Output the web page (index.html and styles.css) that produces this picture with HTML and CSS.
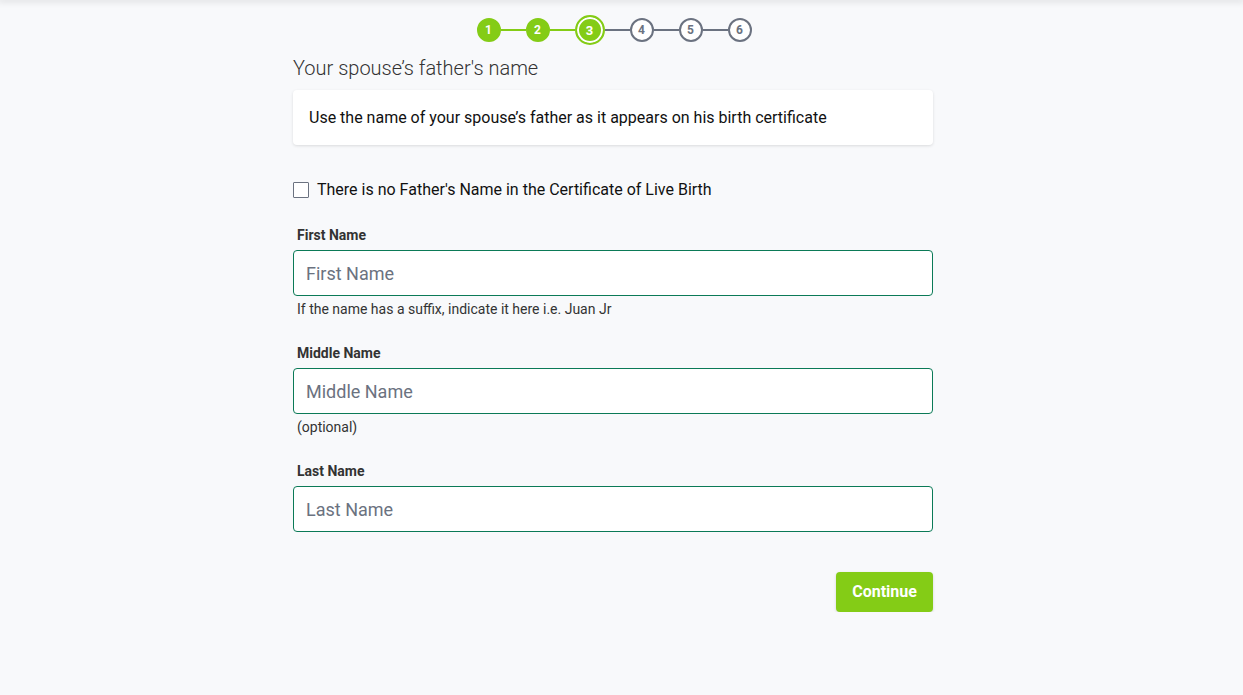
FILE: index.html
```html
<!DOCTYPE html>
<html lang="en">

<head>
    <meta charset="UTF-8">
    <meta name="viewport" content="width=device-width, initial-scale=1.0">
    <title>Spouse's Father's Name</title>
    <link rel="stylesheet" href="styles.css">
</head>

<body>
    <div class="topbar"></div>
    <div class="page">
        <div class="container">
            <div class="stepper">
                <span class="step done">1</span>
                <span class="line done"></span>
                <span class="step done">2</span>
                <span class="line done"></span>
                <span class="step active">3</span>
                <span class="line"></span>
                <span class="step">4</span>
                <span class="line"></span>
                <span class="step">5</span>
                <span class="line"></span>
                <span class="step">6</span>
            </div>

            <h1>Your spouse’s father's name</h1>
            <div class="card">Use the name of your spouse’s father as it appears on his birth certificate</div>

            <form class="form">
                <label class="check">
                    <input type="checkbox">
                    <span>There is no Father's Name in the Certificate of Live Birth</span>
                </label>

                <div class="field">
                    <label for="first">First Name</label>
                    <input type="text" id="first" placeholder="First Name">
                    <small>If the name has a suffix, indicate it here i.e. Juan Jr</small>
                </div>

                <div class="field">
                    <label for="middle">Middle Name</label>
                    <input type="text" id="middle" placeholder="Middle Name">
                    <small>(optional)</small>
                </div>

                <div class="field">
                    <label for="last">Last Name</label>
                    <input type="text" id="last" placeholder="Last Name">
                </div>

                <div class="actions">
                    <button type="submit">Continue</button>
                </div>
            </form>
        </div>
    </div>
</body>

</html>
```

FILE: styles.css
```css
body {
    font-family: 'Roboto', sans-serif;
    background-color: #f8f9fb;
    margin: 0;
    padding: 0;
    color: #111;
}

.topbar {
    height: 0;
    box-shadow: 0 0 6px 2px rgba(0, 0, 0, 0.12);
}

.page {
    padding-right: 17px;
}

.container {
    width: 640px;
    margin: 0 auto;
}

.stepper {
    display: flex;
    align-items: center;
    justify-content: center;
    height: 30px;
    margin-top: 15px;
    padding-left: 2px;
}

.step {
    width: 20px;
    height: 20px;
    border: 2px solid #6b7280;
    border-radius: 50%;
    background: #fff;
    color: #6b7280;
    font-size: 12px;
    font-weight: 700;
    display: flex;
    align-items: center;
    justify-content: center;
}

.step.done {
    background: #84cc16;
    border-color: #84cc16;
    color: #fff;
}

.step.active {
    width: 26px;
    height: 26px;
    background: #84cc16;
    border-color: #84cc16;
    box-shadow: inset 0 0 0 2px #fff;
    color: #fff;
    font-size: 13px;
}

.line {
    width: 25px;
    height: 2px;
    background: #6b7280;
}

.line.done {
    background: #84cc16;
}

h1 {
    font-size: 20px;
    font-weight: 300;
    color: #333;
    margin: 11px 0 10px;
}

.card {
    background: #fff;
    border-radius: 4px;
    box-shadow: 0 1px 3px rgba(0, 0, 0, 0.12);
    padding: 18px 16px;
    font-size: 16px;
    line-height: 19px;
}

.form {
    margin-top: 35px;
}

.check {
    display: flex;
    align-items: center;
    gap: 8px;
    font-size: 16px;
    cursor: pointer;
}

.check input {
    appearance: none;
    width: 16px;
    height: 16px;
    margin: 0;
    border: 1px solid #6b7280;
    border-radius: 1px;
    background: #fff;
}

.field {
    margin-top: 28px;
    display: flex;
    flex-direction: column;
}

.check + .field {
    margin-top: 28px;
}

.field label {
    font-size: 14px;
    font-weight: 700;
    color: #333;
    margin-left: 4px;
    margin-bottom: 7px;
}

.field input {
    height: 46px;
    box-sizing: border-box;
    border: 1px solid #0b7a57;
    border-radius: 4px;
    background: #fff;
    padding: 0 12px;
    font-family: inherit;
    font-size: 18px;
    color: #111;
}

.field input::placeholder {
    color: #6b7280;
}

.field small {
    font-size: 14px;
    color: #333;
    margin: 5px 0 0 4px;
}

.actions {
    display: flex;
    justify-content: flex-end;
    margin-top: 40px;
}

button {
    background-color: #84cc16;
    color: #fff;
    border: none;
    border-radius: 4px;
    width: 97px;
    height: 40px;
    padding: 0 0 2px;
    font-family: inherit;
    font-size: 16px;
    font-weight: 700;
    cursor: pointer;
    box-shadow: 0 1px 3px rgba(0, 0, 0, 0.15);
}
```
